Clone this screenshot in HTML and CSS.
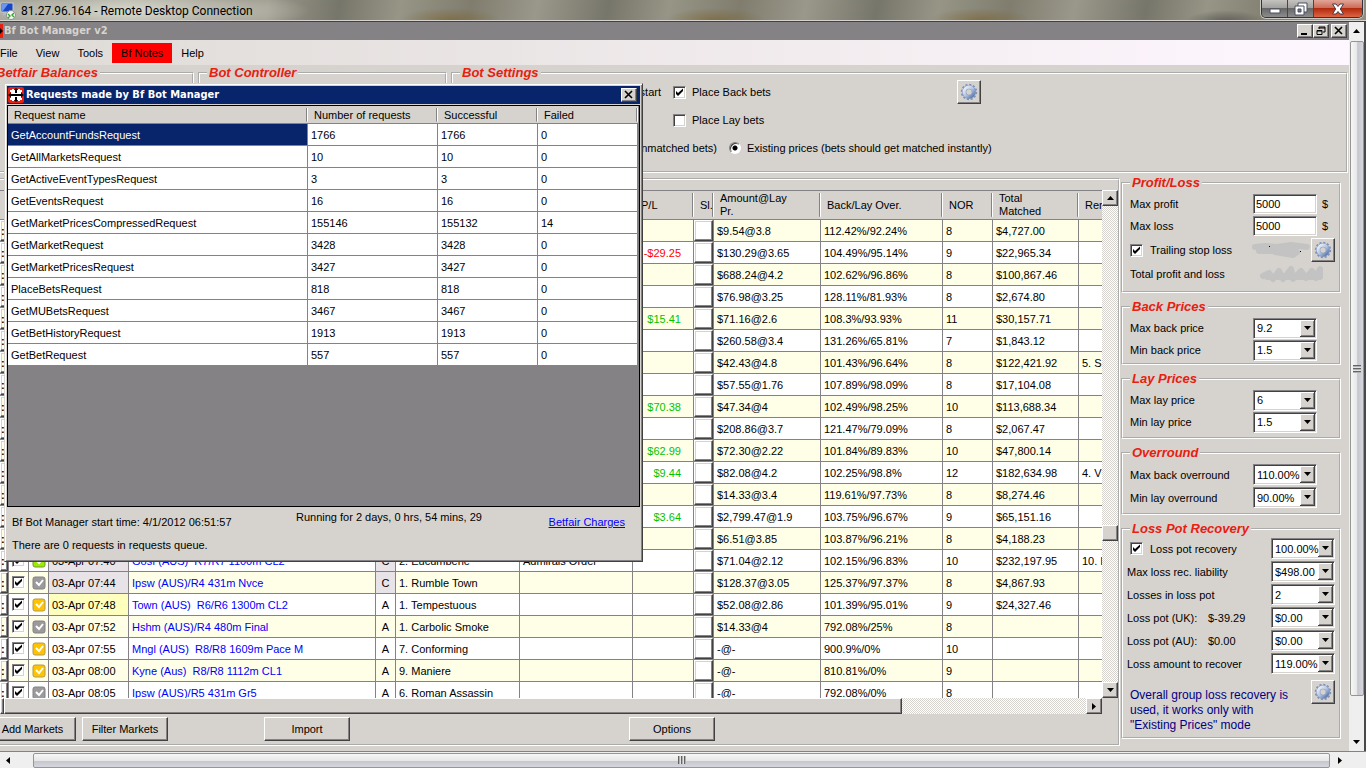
FILE: index.html
```html
<!DOCTYPE html>
<html lang="en">
<head>
    <meta charset="UTF-8">
    <meta name="viewport" content="width=device-width, initial-scale=1.0">
    <title>Bf Bot Manager v2</title>
    <link rel="stylesheet" href="styles.css">
</head>
<body>
    <!-- shared icons -->
    <svg class="defs" width="0" height="0" aria-hidden="true">
        <linearGradient id="steel" x1="0" y1="0" x2="1" y2="1">
            <stop offset="0" stop-color="#eef4fc"/>
            <stop offset="0.5" stop-color="#b4c6e2"/>
            <stop offset="1" stop-color="#5571a8"/>
        </linearGradient>
        <symbol id="gear" viewBox="0 0 16 16">
            <circle cx="8" cy="8" r="6.3" fill="none" stroke="#7d90b8" stroke-width="2" stroke-dasharray="1.8 1.5"/>
            <circle cx="8" cy="8" r="4.3" fill="none" stroke="#8a9cc0" stroke-width="3.8"/>
            <circle cx="8" cy="8" r="4.3" fill="none" stroke="url(#steel)" stroke-width="2.800"/>
        </symbol>
        <symbol id="logo" viewBox="0 0 16 16">
            <rect width="16" height="16" rx="2" fill="#e72010"/>
            <path d="M8 1l3 3H5zM8 15l3-3H5zM0 8l4-3v6zM16 8l-4-3v6zM4 4h8v8H4z" fill="#000"/>
            <path d="M4 2h2v1h1v3h1v1H3V5H2V3h2zM10 2h2v1h2v2h-1v2H8V6h1V3h1zM4 14h2v-1h1v-3h1V9H3v2H2v2h2zM10 14h2v-1h2v-2h-1V9H8v1h1v3h1z" fill="#fff"/>
        </symbol>
    </svg>

    <header class="rdp-title">
        <svg class="rdp-icon" width="17" height="18" viewBox="0 0 17 18">
            <rect x="1" y="1" width="12" height="9" fill="#1845c6" stroke="#c6cbd6"/>
            <path d="M2 2h6L3 9H2z" fill="#6b96ef"/>
            <path d="M4 11h6v2H2z" fill="#b5bac6"/>
            <circle cx="11" cy="13" r="4.500" fill="#f4f6f0" stroke="#8c928c"/>
            <path d="M8 12l2 2-2 2M14 11l-2 2 2 2" fill="none" stroke="#2fa52f" stroke-width="1.400"/>
        </svg>
        <h1>81.27.96.164 - Remote Desktop Connection</h1>
        <div class="aero-buttons">
            <button aria-label="Minimize"><svg width="14" height="14" viewBox="0 0 14 14"><path d="M2 7h10v4H2z" fill="#fff" stroke="#4a5063"/></svg></button>
            <button aria-label="Restore"><svg width="14" height="14" viewBox="0 0 14 14"><path d="M4 1h9v9H4z" fill="#fff" stroke="#4a5063"/><path d="M1 4h9v9H1z" fill="#fff" stroke="#4a5063"/><path d="M4 7h3v3H4z" fill="#777" stroke="#4a5063"/></svg></button>
            <button class="aero-close" aria-label="Close"><svg width="14" height="14" viewBox="0 0 14 14"><path d="M1.500 2H5l2 2.500L9 2h3.500L9.300 7l3.200 5H9L7 9.500 5 12H1.500l3.200-5z" fill="#fff" stroke="#4a3a4a"/></svg></button>
        </div>
    </header>

    <div class="desktop">
        <main class="remote">
            <div class="caption">
                <svg class="caption-logo" width="3" height="16" viewBox="0 0 3 16"><path d="M0 1h3v14H0z" fill="#e72010"/><path d="M0 5l3 3-3 3z" fill="#000"/></svg>
                <h2>Bf Bot Manager v2</h2>
                <div class="win-buttons">
                    <button class="win-btn" aria-label="Minimize window"><svg width="10" height="10"><path d="M1 7h6v2H1z"/></svg></button>
                    <button class="win-btn" aria-label="Restore window"><svg width="10" height="10"><path d="M3 1h6v5H7M3 3V1M3 2h6M1 4.500h5v4H1zM1 5h5" fill="none" stroke="#000"/></svg></button>
                    <button class="win-btn last" aria-label="Close window"><svg width="10" height="10"><path d="M1 1l7 7M8 1L1 8" stroke="#000" stroke-width="1.600"/></svg></button>
                </div>
            </div>

            <nav class="menu">
                <a href="#">File</a>
                <a href="#">View</a>
                <a href="#">Tools</a>
                <a href="#" class="notes">Bf Notes</a>
                <a href="#">Help</a>
            </nav>

            <div class="settings">
                <fieldset class="group balances"><legend>Betfair Balances</legend></fieldset>
                <fieldset class="group controller"><legend>Bot Controller</legend></fieldset>
                <fieldset class="group bot">
                    <legend>Bot Settings</legend>
                    <div class="bot-row">
                        <span class="bot-start">start</span>
                        <input type="checkbox" class="check" id="back-bets" checked>
                        <label for="back-bets">Place Back bets</label>
                        <button class="gear" aria-label="Bot options"><svg width="18" height="18"><use href="#gear"/></svg></button>
                    </div>
                    <div class="bot-row">
                        <span class="bot-start"></span>
                        <input type="checkbox" class="check" id="lay-bets">
                        <label for="lay-bets">Place Lay bets</label>
                    </div>
                    <div class="bot-row">
                        <span class="bot-unmatched">(unmatched bets)</span>
                        <input type="radio" class="radio" id="existing" checked>
                        <label for="existing">Existing prices (bets should get matched instantly)</label>
                    </div>
                </fieldset>
            </div>

            <div class="work">
                <section class="panel">
                    <div class="grid-area">
                        <div class="grid-clip">
                            <table class="markets">
                                <colgroup>
                                    <col class="w-edge"><col class="w-tick"><col class="w-tick"><col class="w-time"><col class="w-name"><col class="w-tick"><col class="w-sel"><col class="w-second"><col class="w-pl"><col class="w-tick"><col class="w-amount"><col class="w-over"><col class="w-nor"><col class="w-total"><col class="w-rem">
                                </colgroup>
                                <thead>
                                    <tr><th></th><th></th><th></th><th></th><th></th><th></th><th></th><th></th><th class="pl-head">P/L</th><th>Sl.</th><th>Amount@Lay<br>Pr.</th><th>Back/Lay Over.</th><th>NOR</th><th>Total<br>Matched</th><th>Rer</th></tr>
                                </thead>
                                <tbody id="markets"></tbody>
                            </table>
                        </div>
                        <div class="track track-v">
                            <button class="win-btn" aria-label="Scroll up"><svg width="7" height="4"><path d="M0 4l3.500-4L7 4z"/></svg></button>
                            <div class="thumb"></div>
                            <button class="win-btn" aria-label="Scroll down"><svg width="7" height="4"><path d="M0 0h7L3.500 4z"/></svg></button>
                        </div>
                    </div>
                    <div class="track track-h">
                        <div class="thumb edge"></div>
                        <div class="thumb"></div>
                        <button class="win-btn" aria-label="Scroll right"><svg width="4" height="7"><path d="M0 0l4 3.500L0 7z"/></svg></button>
                    </div>
                    <div class="actions">
                        <button class="btn add">Add Markets</button>
                        <button class="btn filter">Filter Markets</button>
                        <button class="btn import">Import</button>
                        <button class="btn options">Options</button>
                    </div>
                </section>

                <aside class="side">
                    <fieldset class="group profit">
                        <legend>Profit/Loss</legend>
                        <div class="row"><label for="max-profit">Max profit</label><input class="text" id="max-profit" value="5000"><span class="unit">$</span></div>
                        <div class="row"><label for="max-loss">Max loss</label><input class="text" id="max-loss" value="5000"><span class="unit">$</span></div>
                        <div class="row gear-row">
                            <input type="checkbox" class="check" id="trailing" checked>
                            <label for="trailing">Trailing stop loss</label>
                            <svg class="smudge" width="60" height="20"><path d="M4 7l10-1 12 1 14-2 8 1 8 1M8 11h36M24 12l18 3 4-3" fill="none" stroke="#c3c3c3" stroke-width="6" stroke-linecap="round" stroke-linejoin="round"/><path d="M18 6h1v1h-1zM49 11h1v1h-1z"/></svg>
                            <button class="gear" aria-label="Stop loss options"><svg width="18" height="18"><use href="#gear"/></svg></button>
                        </div>
                        <div class="row">
                            <span>Total profit and loss</span>
                            <svg class="smudge total" width="66" height="20"><path d="M4 12l6-3 4 6 6-8 4 8 8-10 2 10 8-8 5 7 6-7 4 7 4-9v8H8" fill="none" stroke="#c3c3c3" stroke-width="6" stroke-linecap="round" stroke-linejoin="round"/></svg>
                        </div>
                    </fieldset>
                    <fieldset class="group back">
                        <legend>Back Prices</legend>
                        <div class="row"><label for="max-back">Max back price</label><select id="max-back"><option>9.2</option></select></div>
                        <div class="row"><label for="min-back">Min back price</label><select id="min-back"><option>1.5</option></select></div>
                    </fieldset>
                    <fieldset class="group">
                        <legend>Lay Prices</legend>
                        <div class="row"><label for="max-lay">Max lay price</label><select id="max-lay"><option>6</option></select></div>
                        <div class="row"><label for="min-lay">Min lay price</label><select id="min-lay"><option>1.5</option></select></div>
                    </fieldset>
                    <fieldset class="group overround">
                        <legend>Overround</legend>
                        <div class="row"><label for="max-over">Max back overround</label><select id="max-over"><option>110.00%</option></select></div>
                        <div class="row"><label for="min-over">Min lay overround</label><select id="min-over"><option>90.00%</option></select></div>
                    </fieldset>
                    <fieldset class="group losspot">
                        <legend>Loss Pot Recovery</legend>
                        <div class="row"><input type="checkbox" class="check" id="recovery" checked><label for="recovery">Loss pot recovery</label><select aria-label="Recovery rate"><option>100.00%</option></select></div>
                        <div class="row"><label for="liability">Max loss rec. liability</label><select id="liability"><option>$498.00</option></select></div>
                        <div class="row"><label for="losses">Losses in loss pot</label><select id="losses"><option>2</option></select></div>
                        <div class="row"><label class="pot" for="pot-uk">Loss pot (UK):</label><span>$-39.29</span><select id="pot-uk"><option>$0.00</option></select></div>
                        <div class="row"><label class="pot" for="pot-au">Loss pot (AU):</label><span>$0.00</span><select id="pot-au"><option>$0.00</option></select></div>
                        <div class="row"><label for="recover">Loss amount to recover</label><select id="recover"><option>119.00%</option></select></div>
                        <div class="note">
                            <p>Overall group loss recovery is<br>used, it works only with<br>"Existing Prices" mode</p>
                            <button class="gear" aria-label="Recovery options"><svg width="18" height="18"><use href="#gear"/></svg></button>
                        </div>
                    </fieldset>
                </aside>
            </div>
        </main>

        <div class="aero-scroll vertical">
            <svg class="arrow" width="7" height="4"><path d="M0 4l3.500-4L7 4z"/></svg>
            <div class="aero-thumb"><i></i></div>
            <svg class="arrow" width="7" height="4"><path d="M0 0h7L3.500 4z"/></svg>
        </div>
    </div>

    <div class="aero-scroll horizontal">
        <svg class="arrow" width="4" height="7"><path d="M4 0L0 3.500 4 7z"/></svg>
        <div class="aero-thumb"><i></i></div>
        <svg class="arrow" width="4" height="7"><path d="M0 0l4 3.500L0 7z"/></svg>
    </div>

    <div class="dialog" role="dialog" aria-labelledby="dialog-title">
        <div class="dialog-title">
            <svg width="16" height="16"><use href="#logo"/></svg>
            <h2 id="dialog-title">Requests made by Bf Bot Manager</h2>
            <button class="win-btn" aria-label="Close requests"><svg width="10" height="10"><path d="M1 1l7 7M8 1L1 8" stroke="#000" stroke-width="1.600"/></svg></button>
        </div>
        <div class="request-grid">
            <table class="requests">
                <thead>
                    <tr><th class="w-request">Request name</th><th class="w-number">Number of requests</th><th class="w-result">Successful</th><th class="w-result">Failed</th></tr>
                </thead>
                <tbody>
                    <tr><td class="selected">GetAccountFundsRequest</td><td>1766</td><td>1766</td><td>0</td></tr>
                    <tr><td>GetAllMarketsRequest</td><td>10</td><td>10</td><td>0</td></tr>
                    <tr><td>GetActiveEventTypesRequest</td><td>3</td><td>3</td><td>0</td></tr>
                    <tr><td>GetEventsRequest</td><td>16</td><td>16</td><td>0</td></tr>
                    <tr><td>GetMarketPricesCompressedRequest</td><td>155146</td><td>155132</td><td>14</td></tr>
                    <tr><td>GetMarketRequest</td><td>3428</td><td>3428</td><td>0</td></tr>
                    <tr><td>GetMarketPricesRequest</td><td>3427</td><td>3427</td><td>0</td></tr>
                    <tr><td>PlaceBetsRequest</td><td>818</td><td>818</td><td>0</td></tr>
                    <tr><td>GetMUBetsRequest</td><td>3467</td><td>3467</td><td>0</td></tr>
                    <tr><td>GetBetHistoryRequest</td><td>1913</td><td>1913</td><td>0</td></tr>
                    <tr><td>GetBetRequest</td><td>557</td><td>557</td><td>0</td></tr>
                </tbody>
            </table>
        </div>
        <div class="dialog-info">
            <span class="started">Bf Bot Manager start time: 4/1/2012 06:51:57</span>
            <span class="running">Running for 2 days, 0 hrs, 54 mins, 29</span>
            <a href="#">Betfair Charges</a>
        </div>
        <p class="queue">There are 0 requests in requests queue.</p>
    </div>

    <script>
        // icon, time, market, state, selection, second, p/l, amount, overround, runners, matched, removed
        var rows = [
            ['', '', '', '', '', '', '', '$9.54@3.8', '112.42%/92.24%', '8', '$4,727.00', ''],
            ['', '', '', '', '', '', '-$29.25', '$130.29@3.65', '104.49%/95.14%', '9', '$22,965.34', ''],
            ['', '', '', '', '', '', '', '$688.24@4.2', '102.62%/96.86%', '8', '$100,867.46', ''],
            ['', '', '', '', '', '', '', '$76.98@3.25', '128.11%/81.93%', '8', '$2,674.80', ''],
            ['', '', '', '', '', '', '$15.41', '$71.16@2.6', '108.3%/93.93%', '11', '$30,157.71', ''],
            ['', '', '', '', '', '', '', '$260.58@3.4', '131.26%/65.81%', '7', '$1,843.12', ''],
            ['', '', '', '', '', '', '', '$42.43@4.8', '101.43%/96.64%', '8', '$122,421.92', '5. S'],
            ['', '', '', '', '', '', '', '$57.55@1.76', '107.89%/98.09%', '8', '$17,104.08', ''],
            ['', '', '', '', '', '', '$70.38', '$47.34@4', '102.49%/98.25%', '10', '$113,688.34', ''],
            ['', '', '', '', '', '', '', '$208.86@3.7', '121.47%/79.09%', '8', '$2,067.47', ''],
            ['', '', '', '', '', '', '$62.99', '$72.30@2.22', '101.84%/89.83%', '10', '$47,800.14', ''],
            ['', '', '', '', '', '', '$9.44', '$82.08@4.2', '102.25%/98.8%', '12', '$182,634.98', '4. V'],
            ['', '', '', '', '', '', '', '$14.33@3.4', '119.61%/97.73%', '8', '$8,274.46', ''],
            ['', '', '', '', '', '', '$3.64', '$2,799.47@1.9', '103.75%/96.67%', '9', '$65,151.16', ''],
            ['', '', '', '', '', '', '', '$6.51@3.85', '103.87%/96.21%', '8', '$4,188.23', ''],
            ['green', '03-Apr 07:40', 'Gosf (AUS)  R7/R7 1100m CL2', 'C', '2. Eucumbene', 'Admirals Order', '', '$71.04@2.12', '102.15%/96.83%', '10', '$232,197.95', '10. I'],
            ['grey', '03-Apr 07:44', 'Ipsw (AUS)/R4 431m Nvce', 'C', '1. Rumble Town', '', '', '$128.37@3.05', '125.37%/97.37%', '8', '$4,867.93', ''],
            ['gold', '03-Apr 07:48', 'Town (AUS)  R6/R6 1300m CL2', 'A', '1. Tempestuous', '', '', '$52.08@2.86', '101.39%/95.01%', '9', '$24,327.46', ''],
            ['grey', '03-Apr 07:52', 'Hshm (AUS)/R4 480m Final', 'A', '1. Carbolic Smoke', '', '', '$14.33@4', '792.08%/25%', '8', '', ''],
            ['gold', '03-Apr 07:55', 'Mngl (AUS)  R8/R8 1609m Pace M', 'A', '7. Conforming', '', '', '-@-', '900.9%/0%', '10', '', ''],
            ['gold', '03-Apr 08:00', 'Kyne (Aus)  R8/R8 1112m CL1', 'A', '9. Maniere', '', '', '-@-', '810.81%/0%', '9', '', ''],
            ['grey', '03-Apr 08:05', 'Ipsw (AUS)/R5 431m Gr5', 'A', '6. Roman Assassin', '', '', '-@-', '792.08%/0%', '8', '', '']
        ];

        function cell(text, cls) {
            return '<td class="' + (cls || '') + '">' + text + '</td>';
        }

        var html = '';
        rows.forEach(function (r) {
            var closed = r[3] === 'C' ? 'closed' : '';
            var time = r[1] === '03-Apr 07:48' ? 'next' : closed;
            var mark = r[0] ? '<svg width="14" height="14" class="mark ' + r[0] + '"><rect x="1" y="1" width="12" height="12" rx="2"/><path d="M4 6l3 3 4-5"/></svg>' : '';
            html += '<tr>' +
                cell('<button class="cell-btn">:</button>', 'slot') +
                cell('<input type="checkbox" class="check" aria-label="Enable market" checked>', 'tick') +
                cell(mark, 'tick') +
                cell(r[1], time) +
                cell(r[2], 'market') +
                cell(r[3], 'state ' + closed) +
                cell(r[4]) +
                cell(r[5]) +
                cell(r[6], 'pl ' + (r[6].charAt(0) === '-' ? 'loss' : 'win')) +
                cell('<button class="cell-btn" aria-label="Select"></button>', 'slot') +
                cell(r[7]) + cell(r[8]) + cell(r[9]) + cell(r[10]) + cell(r[11]) +
                '</tr>';
        });
        document.getElementById('markets').innerHTML = html;
    </script>
</body>
</html>
```
FILE: styles.css
```css
* {
    box-sizing: border-box;
}

body {
    margin: 0;
    height: 100vh;
    display: flex;
    flex-direction: column;
    overflow: hidden;
    position: relative;
    background-color: #d6d3ce;
    color: #000;
    font-family: "Liberation Sans", Arial, sans-serif;
    font-size: 11px;
    line-height: 14px;
}

button, input, select {
    font: inherit;
    color: inherit;
    margin: 0;
    padding: 0;
    border-radius: 0;
}

h1, h2, p {
    margin: 0;
}

.defs {
    position: absolute;
}

/* remote desktop frame */
.rdp-title {
    height: 22px;
    flex: none;
    display: flex;
    align-items: center;
    border-bottom: 1px solid #424142;
    box-shadow: inset 0 -1px #d6d3ce;
    background:
        radial-gradient(ellipse 180px 24px at 130px 11px, rgba(225, 224, 214, 0.9), rgba(210, 209, 198, 0.6) 60%, transparent),
        radial-gradient(ellipse 50px 12px at 450px 20px, rgba(122, 98, 45, 0.6), transparent),
        radial-gradient(ellipse 50px 12px at 715px 20px, rgba(122, 98, 45, 0.6), transparent),
        radial-gradient(ellipse 50px 12px at 980px 20px, rgba(122, 98, 45, 0.6), transparent),
        radial-gradient(ellipse 40px 12px at 1225px 22px, rgba(60, 58, 62, 0.6), transparent),
        repeating-linear-gradient(100deg, #9a988b 0, #77766a 70px, #969586 130px, #807d6e 200px, #9a988b 265px);
}

.rdp-title h1 {
    flex: 1;
    font: 12px/16px Roboto, "Open Sans", sans-serif;
}

.rdp-icon {
    margin-right: 4px;
}

.aero-buttons {
    align-self: flex-start;
    display: flex;
    height: 18px;
    margin-right: 3px;
    border: 1px solid #33343a;
    border-top: 0;
    border-radius: 0 0 5px 5px;
    overflow: hidden;
    box-shadow: 0 0 0 1px #c8c8c4;
}

.aero-buttons button {
    width: 26px;
    border: 0;
    border-right: 1px solid #44464e;
    background: linear-gradient(#c4c3c0, #a3a29f 45%, #686768 50%, #8e8d8c);
    display: flex;
    align-items: center;
    justify-content: center;
}

.aero-buttons .aero-close {
    width: 48px;
    border-right: 0;
    background: linear-gradient(#e2a597, #cc6e5a 45%, #b32a0e 50%, #dc6544);
}

.desktop {
    flex: 1;
    min-height: 0;
    display: flex;
    border-right: 2px solid #4a494a;
}

.remote {
    flex: 1;
    min-width: 0;
    display: flex;
    flex-direction: column;
}

.caption {
    height: 18px;
    display: flex;
    align-items: center;
    background-color: #848284;
    color: #d6d3ce;
}

.caption h2, .dialog-title h2 {
    flex: 1;
    font: bold 11px/16px "DejaVu Sans Condensed", "DejaVu Sans", sans-serif;
}

.caption-logo {
    margin-right: 1px;
}

.win-buttons {
    display: flex;
    padding-right: 2px;
}

.win-btn {
    width: 16px;
    height: 14px;
    flex: none;
    border: 1px solid;
    border-color: #fff #424142 #424142 #fff;
    box-shadow: inset -1px -1px #848284;
    background-color: #d6d3ce;
    display: flex;
    align-items: center;
    justify-content: center;
}

.win-btn.last {
    margin-left: 2px;
}

.menu {
    height: 25px;
    display: flex;
    align-items: center;
    background: linear-gradient(to right, #dedbd6, #fff7ff);
}

.menu a {
    padding: 3px 9px;
    color: #000;
    text-decoration: none;
}

.menu a:first-child {
    padding-left: 0;
}

.menu .notes {
    background-color: #f00;
}

/* group boxes */
.group {
    min-width: 0;
    margin: 0;
    padding: 2px 4px 4px 7px;
    border: 2px groove #fff;
}

.group legend {
    padding: 0 2px;
    font: italic bold 13px/16px "Liberation Sans", Arial, sans-serif;
    color: #e72010;
}

.settings {
    height: 108px;
    display: flex;
    gap: 4px;
    padding-right: 1px;
}

.balances {
    width: 194px;
    padding-left: 0;
    border-left: 0;
}

.balances legend {
    padding-left: 0;
    margin-left: -4px;
}

.controller {
    width: 249px;
}

.bot {
    flex: 1;
    padding-top: 0;
}

.bot-row {
    height: 28px;
    display: flex;
    align-items: center;
}

.bot-row:nth-child(2) {
    margin-top: -3px;
}

.bot-start {
    width: 201px;
    text-align: right;
    margin-right: 12px;
}

.bot-unmatched {
    width: 257px;
    text-align: right;
    margin-right: 12px;
}

.bot-row .radio {
    margin-right: 6px;
}

.bot-row .check {
    margin-right: 6px;
}

.bot-row .gear {
    margin-left: 186px;
}

.check {
    appearance: none;
    width: 13px;
    height: 13px;
    flex: none;
    border: 1px solid;
    border-color: #848284 #fff #fff #848284;
    box-shadow: inset 1px 1px #424142, inset -1px -1px #d6d3ce;
    background-color: #fff;
}

.check:checked {
    background-image: url("data:image/svg+xml,%3Csvg xmlns='http://www.w3.org/2000/svg' width='11' height='11'%3E%3Cpath d='M2 4v3l2 2 5-5V1.500L4 6z'/%3E%3C/svg%3E");
}

.radio {
    appearance: none;
    width: 12px;
    height: 12px;
    flex: none;
    border: 1px solid;
    border-color: #848284 #fff #fff #848284;
    border-radius: 50%;
    background: radial-gradient(circle, #000 2px, #fff 3px);
    box-shadow: inset 1px 1px #424142;
}

.gear {
    width: 24px;
    height: 24px;
    flex: none;
    display: flex;
    align-items: center;
    justify-content: center;
    background-color: #d6d3ce;
    border: 1px solid;
    border-color: #fff #424142 #424142 #fff;
    box-shadow: inset -1px -1px #848284;
}

/* market grid */
.work {
    flex: 1;
    min-height: 0;
    display: flex;
    gap: 1px;
    padding: 2px 8px 0 0;
}

.panel {
    flex: 1;
    min-width: 0;
    display: flex;
    flex-direction: column;
    margin: 3px 0 5px;
    padding-top: 10px;
    border: 2px groove #fff;
    border-left: 0;
}

.grid-area {
    flex: 1;
    min-height: 0;
    display: flex;
}

.grid-clip {
    flex: 1;
    min-width: 0;
    overflow: hidden;
}

.markets, .requests {
    table-layout: fixed;
    border-collapse: separate;
    border-spacing: 0;
}

.markets {
    width: 1179px;
    border-top: 1px solid #848284;
}

.w-edge { width: 9px; }
.w-tick { width: 20px; }
.w-time { width: 80px; }
.w-name { width: 247px; }
.w-sel { width: 124px; }
.w-second { width: 113px; }
.w-pl { width: 61px; }
.w-amount { width: 107px; }
.w-over { width: 122px; }
.w-nor { width: 50px; }
.w-total { width: 86px; }
.w-rem { width: 100px; }

th {
    padding: 0 6px;
    border-bottom: 1px solid #848284;
    background: linear-gradient(#848284, #848284) right 1px center / 1px 85% no-repeat, linear-gradient(#fff, #fff) right center / 1px 85% no-repeat, #d6d3ce;
    font-weight: normal;
    text-align: left;
    overflow: hidden;
}

.markets th {
    height: 29px;
    line-height: 13px;
}

.markets .pl-head {
    padding-left: 8px;
}

td {
    height: 22px;
    padding: 0 3px;
    border-right: 1px solid #848284;
    border-bottom: 1px solid #848284;
    background-color: #fff;
    white-space: pre;
    overflow: hidden;
}

.markets tr:nth-child(odd) td {
    background-color: #ffffe7;
}

.markets tr td.closed {
    background-color: #e7e3e7;
}

.markets tr td.next {
    background-color: #ffffbd;
}

.markets .market {
    color: #00f;
}

.markets .state {
    padding: 0;
    text-align: center;
}

.markets .pl {
    padding-right: 12px;
    text-align: right;
}

.win {
    color: #00c300;
}

.loss {
    color: #f00;
}

.markets .slot {
    padding: 0;
}

.markets .tick {
    padding: 0 3px;
}

.tick .check, .mark {
    display: block;
}

.cell-btn {
    display: block;
    width: 100%;
    height: 21px;
    border: 1px solid;
    border-color: #fff #424142 #424142 #fff;
    box-shadow: inset -1px -1px #848284, inset 1px 1px #d6d3ce;
    background-color: transparent;
    text-align: left;
    font-weight: bold;
}

.slot:nth-child(10) .cell-btn {
    background-color: #fff;
}

.mark path {
    fill: none;
    stroke: #fff;
    stroke-width: 2;
}

.mark rect {
    fill: #9c9a9c;
    stroke: #848284;
}

.mark.gold rect {
    fill: #ffc300;
    stroke: #b59a52;
}

.mark.green rect {
    fill: #9ceb00;
    stroke: #739a31;
}

.track {
    display: flex;
    background: repeating-conic-gradient(#fff 0 25%, #d6d3ce 0 50%) 0 0 / 2px 2px;
}

.track-v {
    width: 16px;
    flex-direction: column;
    justify-content: space-between;
}

.track-v .win-btn {
    height: 16px;
}

.track-v .thumb {
    height: 16px;
    margin-top: 318px;
    margin-bottom: 140px;
}

.thumb {
    border: 1px solid;
    border-color: #fff #424142 #424142 #fff;
    box-shadow: inset -1px -1px #848284;
    background-color: #d6d3ce;
}

.track-h {
    height: 16px;
    margin-right: 16px;
}

.track-h .thumb {
    flex: 0 1 898px;
}

.track-h .edge {
    flex: none;
    width: 4px;
}

.track-h .win-btn {
    height: 16px;
    margin-left: auto;
}

.actions {
    display: flex;
    padding: 3px 0;
}

.btn {
    width: 86px;
    height: 24px;
    border: 1px solid;
    border-color: #fff #424142 #424142 #fff;
    box-shadow: inset -1px -1px #848284;
    background-color: #d6d3ce;
}

.add {
    width: 76px;
    padding-right: 10px;
    border-left: 0;
}

.filter {
    margin-left: 6px;
}

.import {
    margin-left: 96px;
}

.options {
    margin-left: 279px;
}

/* right column */
.side {
    width: 220px;
    flex: none;
    display: flex;
    flex-direction: column;
    gap: 6px;
}

.side .row {
    height: 22px;
    display: flex;
    align-items: center;
}

.side .row > label:first-child, .side .row > span:first-child {
    width: 123px;
}

.side .profit .gear-row {
    height: 26px;
}

.profit {
    padding-bottom: 6px;
}

.side .back {
    padding-bottom: 2px;
}

.profit .smudge {
    margin-left: auto;
}

.profit .total {
    margin-right: 10px;
}

.row .check {
    margin-right: 7px;
}

.text {
    width: 64px;
    height: 20px;
    padding-left: 2px;
    border: 1px solid;
    border-color: #848284 #fff #fff #848284;
    box-shadow: inset 1px 1px #424142, inset -1px -1px #d6d3ce;
    background-color: #fff;
}

.unit {
    margin-left: 5px;
}

select {
    appearance: none;
    width: 64px;
    height: 21px;
    padding: 0 0 0 3px;
    border: 1px solid;
    border-color: #848284 #fff #fff #848284;
    box-shadow: inset 1px 1px #424142, inset -1px -1px #d6d3ce;
    background: #fff url("data:image/svg+xml,%3Csvg xmlns='http://www.w3.org/2000/svg' width='15' height='17'%3E%3Cpath fill='%23424142' d='M0 0h15v17H0z'/%3E%3Cpath fill='%23fff' d='M0 0h14v16H0z'/%3E%3Cpath fill='%23848284' d='M1 1h13v15H1z'/%3E%3Cpath fill='%23d6d3ce' d='M1 1h12v14H1z'/%3E%3Cpath d='M4 6h7l-3.500 4z'/%3E%3C/svg%3E") right 1px center no-repeat;
}

.overround .row {
    height: 23px;
}

.side .losspot {
    padding-top: 0;
    padding-left: 4px;
}

.losspot legend {
    margin-left: 3px;
}

.losspot .row {
    height: 23px;
}

.losspot .check {
    margin-left: 3px;
}

.losspot select {
    margin-left: auto;
}

.side .losspot .row > .pot {
    width: 81px;
}

.note {
    display: flex;
    justify-content: space-between;
    padding: 5px 0 0 3px;
}

.note p {
    padding-top: 8px;
    font-size: 12px;
    line-height: 15px;
    color: #000084;
}

/* outer scroll bars */
.aero-scroll {
    display: flex;
    align-items: center;
    background-color: #efefef;
}

.vertical {
    width: 15px;
    flex-direction: column;
    padding: 7px 0;
    gap: 8px;
}

.horizontal {
    height: 17px;
    flex: none;
    padding: 0 24px 0 6px;
    gap: 8px;
    border-top: 1px solid #848284;
}

.aero-thumb {
    flex: 1;
    display: flex;
    align-items: center;
    justify-content: center;
    border: 1px solid #949694;
    border-radius: 2px;
}

.vertical .aero-thumb {
    width: 14px;
    margin-bottom: 36px;
    background: linear-gradient(to right, #f7f7f7, #e7e7e7 50%, #c6c7ce 55%, #d6d7de);
}

.horizontal .aero-thumb {
    height: 15px;
    margin-left: 15px;
    background: linear-gradient(#f7f7f7, #e7e7e7 50%, #c6c7ce 55%, #d6d7de);
}

.aero-thumb i {
    width: 8px;
    height: 8px;
    background: repeating-linear-gradient(to right, #636563 0, #636563 1px, #fff 2px, #c6c7ce 3px);
}

.vertical i {
    background: repeating-linear-gradient(#636563 0, #636563 1px, #fff 2px, #c6c7ce 3px);
}

/* requests window, floats over the main form */
.dialog {
    position: absolute;
    left: 4px;
    top: 83px;
    width: 639px;
    padding: 2px 2px 8px;
    border: 1px solid;
    border-color: #d6d3ce #424142 #424142 #d6d3ce;
    box-shadow: inset 1px 1px #fff, inset -1px -1px #848284;
    background-color: #d6d3ce;
}

.dialog-title {
    height: 18px;
    display: flex;
    align-items: center;
    gap: 2px;
    padding: 0 3px 0 1px;
    background-color: #08246b;
    color: #fff;
}

.request-grid {
    height: 402px;
    margin-top: 1px;
    border: 1px solid #000;
    background-color: #848284;
}

.requests {
    width: calc(100% - 2px);
    border-top: 1px solid #d6d3ce;
}

.requests th {
    height: 17px;
}

.w-request { width: 300px; }
.w-number { width: 130px; }
.w-result { width: 100px; }

.requests .selected {
    background-color: #08246b;
    color: #fff;
}

.dialog-info {
    display: flex;
    padding: 3px 15px 0 5px;
}

.started {
    width: 284px;
    padding-top: 5px;
}

.running {
    flex: 1;
}

.dialog-info a {
    padding-top: 5px;
    color: #00f;
}

.queue {
    padding: 9px 5px 1px;
}
```
